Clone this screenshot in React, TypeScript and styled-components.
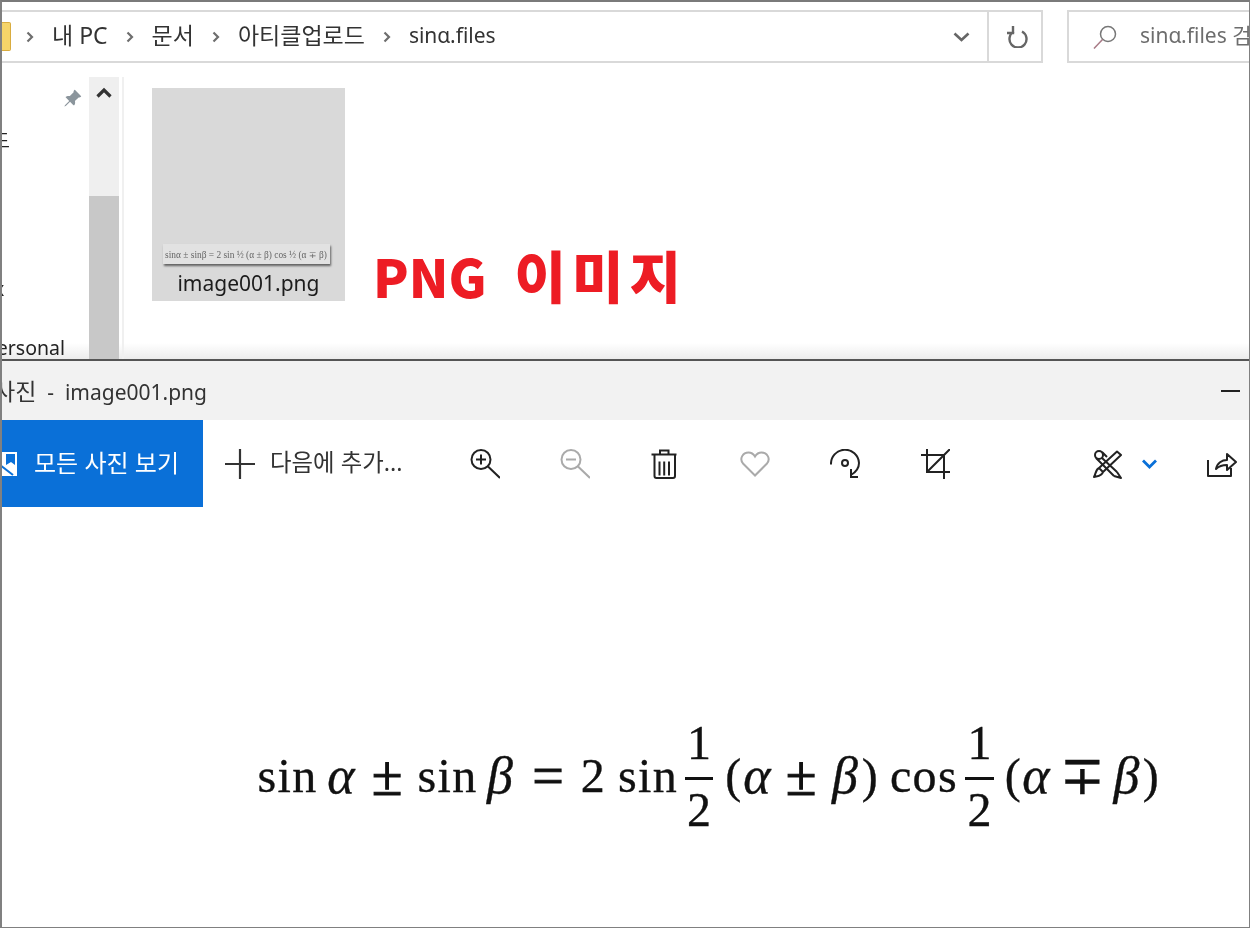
import React from 'react'
import styled, { createGlobalStyle } from 'styled-components'
import { BsPinAngleFill } from 'react-icons/bs'

const GlobalStyle = createGlobalStyle`
  html, body {
    margin: 0;
    background: #fff;
  }
`

const uiFont = `"Noto Sans", "Noto Sans CJK KR", sans-serif`
const mathFont = `"Liberation Serif", "DejaVu Serif", serif`

const Frame = styled.div`
  box-sizing: border-box;
  width: 1250px;
  height: 928px;
  display: flex;
  flex-direction: column;
  overflow: hidden;
  background: #fff;
  border-top: 2px solid #7a7a7a;
  border-left: 2px solid #808080;
  border-right: 1px solid #808080;
  border-bottom: 1px solid #808080;
  font-family: ${uiFont};
  color: #222;
  /* the screenshot is an upscaled capture, everything in it is a little soft */
  filter: blur(0.4px);
`

const Explorer = styled.section`
  flex: 0 0 357px;
  display: flex;
  flex-direction: column;
  overflow: hidden;
  background: linear-gradient(#fff calc(100% - 16px), #ececec);
  border-bottom: 2px solid #555;
`

const AddressRow = styled.div`
  display: flex;
  gap: 24px;
  padding-top: 8px;
  height: 53px;
`

const AddressBar = styled.div`
  flex: 0 0 1041px;
  box-sizing: border-box;
  display: flex;
  align-items: center;
  gap: 18px;
  border: 2px solid #d9d9d9;
  border-left: 0;
  font-size: 21px;
  color: #333;
`

const FolderTab = styled.span`
  flex: 0 0 9px;
  height: 29px;
  margin-right: -3px;
  background: #f5d469;
  border: 1px solid #d9ac3f;
  border-left: 0;
  border-radius: 0 2px 2px 0;
  box-sizing: border-box;
`

const Crumb = styled.span<{ $korean?: boolean }>`
  white-space: nowrap;
  line-height: 1;
  font-size: ${({ $korean }) => ($korean ? '23px' : '21px')};
  margin-top: -2px;
`

const AddressTools = styled.div`
  margin-left: auto;
  display: flex;
  align-self: stretch;
  align-items: center;
`

const DropButton = styled.span`
  display: flex;
  margin-right: 17px;
`

const RefreshButton = styled.span`
  display: flex;
  align-items: center;
  justify-content: center;
  align-self: stretch;
  width: 54px;
  padding-left: 5px;
  box-sizing: border-box;
  border-left: 2px solid #d9d9d9;
`

const SearchBox = styled.div`
  flex: 1;
  display: flex;
  align-items: center;
  gap: 23px;
  padding-left: 24px;
  border: 2px solid #d9d9d9;
  border-right: 0;
  overflow: hidden;
  white-space: nowrap;
  font-size: 21px;
  color: #6d6d6d;
`

const SearchGlyph = styled.svg`
  flex: 0 0 24px;
`

const SearchText = styled.span`
  margin-top: -5px;
`

const ExplorerBody = styled.div`
  flex: 1;
  display: flex;
  min-height: 0;
  padding-top: 14px;
`

const Sidebar = styled.nav`
  flex: 0 0 87px;
  position: relative;
  overflow: hidden;
  display: flex;
  flex-direction: column;
  font-size: 19.5px;
  line-height: 28px;
`

const PinButton = styled.span`
  position: absolute;
  top: 12px;
  right: 7px;
  display: flex;
  color: #8b959c;
`

const NavLabel = styled.span<{ $top: number; $left: number }>`
  margin-top: ${({ $top }) => $top}px;
  margin-left: ${({ $left }) => $left}px;
  white-space: nowrap;
`

const Scrollbar = styled.div`
  flex: 0 0 30px;
  display: flex;
  flex-direction: column;
  background: #efefef;
`

const ScrollArrow = styled.span`
  flex: 0 0 119px;
  display: flex;
  justify-content: center;
  padding-top: 10px;
  box-sizing: border-box;
`

const ScrollThumb = styled.span`
  flex: 1;
  background: #c8c8c8;
`

const PaneDivider = styled.span`
  flex: 0 0 2px;
  margin-left: 3px;
  background: #f0f0f0;
`

const FileArea = styled.div`
  flex: 1;
  display: flex;
  align-items: flex-start;
  padding: 11px 0 0 28px;
`

const FileTile = styled.div`
  width: 193px;
  height: 213px;
  display: flex;
  flex-direction: column;
  align-items: center;
  justify-content: flex-end;
  background: #d9d9d9;
  padding-bottom: 3px;
  box-sizing: border-box;
`

const Thumb = styled.div`
  width: 167px;
  height: 20px;
  margin: 0 5px 4px 0;
  display: flex;
  align-items: center;
  justify-content: center;
  background: #e2e2e2;
  box-shadow: 1px 2px 2px rgba(0, 0, 0, 0.55);
  font-family: ${mathFont};
  font-size: 9.4px;
  color: #666;
  white-space: nowrap;
  overflow: hidden;
`

const FileName = styled.span`
  font-size: 21px;
  line-height: 30px;
  color: #1c1c1c;
`

const RedLabel = styled.span`
  margin: 150px 0 0 28px;
  display: flex;
  align-items: baseline;
  gap: 28px;
  font-family: "Noto Sans CJK KR", sans-serif;
  line-height: 72px;
  font-weight: 900;
  color: #ed1c24;
  white-space: nowrap;
`

const RedWord = styled.span<{ $size: number; $spacing: number }>`
  font-size: ${({ $size }) => $size}px;
  letter-spacing: ${({ $spacing }) => $spacing}px;
`

const TitleBar = styled.header`
  flex: 0 0 59px;
  display: flex;
  align-items: center;
  justify-content: space-between;
  background: #f2f2f2;
  padding-right: 9px;
  font-size: 21px;
  color: #333;
`

const WindowTitle = styled.span`
  margin: -2px 0 0 -8px;
  white-space: pre;
`

const TitleKorean = styled.span`
  font-size: 23px;
`

const MinimizeLine = styled.span`
  width: 19px;
  height: 2px;
  background: #222;
`

const Toolbar = styled.div`
  flex: 0 0 87px;
  display: flex;
  align-items: center;
  padding-right: 12px;
`

const AllPhotosButton = styled.div`
  flex: 0 0 201px;
  align-self: stretch;
  display: flex;
  align-items: center;
  gap: 15px;
  background: #0a70d8;
  color: #fff;
  font-size: 24px;
  white-space: nowrap;
  overflow: hidden;
`

const AddButton = styled.div`
  flex: 0 0 237px;
  box-sizing: border-box;
  display: flex;
  align-items: center;
  gap: 15px;
  padding-left: 22px;
  font-size: 23.4px;
  color: #333;
  white-space: nowrap;
`

const ButtonText = styled.span`
  margin-top: -5px;
`

const ToolButton = styled.span`
  flex: 0 0 90px;
  display: flex;
  justify-content: center;
`

const RightTools = styled.div`
  margin-left: auto;
  display: flex;
  align-items: center;
`

const EditChevron = styled.span`
  display: flex;
  margin: 0 50px 0 19px;
`

const Viewer = styled.main`
  flex: 1;
  padding: 210px 0 0 255px;
`

const Formula = styled.div`
  display: flex;
  align-items: center;
  height: 118px;
  font-family: ${mathFont};
  font-size: 48px;
  line-height: 48px;
  color: #111;
  -webkit-text-stroke: 0.35px #111;
`

const tokenSize = { plain: '48px', greek: '52px', op: '56px', sign: '54px' }

const Token = styled.span<{ $w: number; $ml: number; $kind: keyof typeof tokenSize }>`
  flex: 0 0 ${({ $w }) => $w}px;
  min-width: 0;
  margin-left: ${({ $ml }) => $ml}px;
  display: flex;
  justify-content: center;
  white-space: nowrap;
  letter-spacing: ${({ $kind }) => ($kind === 'plain' ? '1.4px' : '0')};
  font-style: ${({ $kind }) => ($kind === 'greek' ? 'italic' : 'normal')};
  font-size: ${({ $kind }) => tokenSize[$kind]};
  -webkit-text-stroke-width: ${({ $kind }) => ($kind === 'op' ? '1px' : 'inherit')};
`

const Fraction = styled.span<{ $w: number; $ml: number }>`
  flex: 0 0 ${({ $w }) => $w}px;
  min-width: 0;
  margin-left: ${({ $ml }) => $ml}px;
  display: flex;
  flex-direction: column;
  align-items: center;
`

const FractionBar = styled.span`
  align-self: stretch;
  height: 3px;
  margin: 10px 0 6px;
  background: #111;
`

type Piece =
  | { kind: 'plain' | 'greek' | 'op' | 'sign'; text: string; x: number; w: number }
  | { kind: 'half'; x: number; w: number }

// x positions of each symbol, read off the screenshot
const pieces: Piece[] = [
  { kind: 'plain', text: 'sin', x: 257, w: 61 },
  { kind: 'greek', text: 'α', x: 328, w: 26 },
  { kind: 'op', text: '±', x: 372, w: 30 },
  { kind: 'plain', text: 'sin', x: 417, w: 61 },
  { kind: 'greek', text: 'β', x: 487, w: 26 },
  { kind: 'op', text: '=', x: 533, w: 30 },
  { kind: 'plain', text: '2', x: 583, w: 21 },
  { kind: 'plain', text: 'sin', x: 617, w: 62 },
  { kind: 'half', x: 685, w: 28 },
  { kind: 'plain', text: '(', x: 725, w: 18 },
  { kind: 'greek', text: 'α', x: 743, w: 28 },
  { kind: 'op', text: '±', x: 786, w: 30 },
  { kind: 'greek', text: 'β', x: 832, w: 26 },
  { kind: 'plain', text: ')', x: 863, w: 15 },
  { kind: 'plain', text: 'cos', x: 891, w: 66 },
  { kind: 'half', x: 965, w: 29 },
  { kind: 'plain', text: '(', x: 1005, w: 17 },
  { kind: 'greek', text: 'α', x: 1023, w: 26 },
  { kind: 'sign', text: '∓', x: 1067, w: 30 },
  { kind: 'greek', text: 'β', x: 1113, w: 27 },
  { kind: 'plain', text: ')', x: 1143, w: 17 },
]

const Chevron = () => (
  <svg width="8" height="14" viewBox="0 0 8 14" fill="none" stroke="#6e6e6e" strokeWidth="2.2">
    <path d="M1.5 2.5 6 7l-4.5 4.5" />
  </svg>
)

const ZoomIcon = ({ minus }: { minus?: boolean }) => (
  <svg width="30" height="30" viewBox="0 0 30 30" fill="none" stroke={minus ? '#aaa' : '#222'} strokeWidth="2">
    <circle cx="11" cy="10.5" r="9.5" />
    <path d="M18 17.5 30 29M6 10.5h10" />
    {!minus && <path d="M11 5.5v10" />}
  </svg>
)

const TrashIcon = () => (
  <svg width="30" height="30" viewBox="0 0 30 30" fill="none" stroke="#222" strokeWidth="2">
    <path d="M1.5 5.5h25M10 5V1.5h8.500V5M4.500 5.500V27a2 2 0 0 0 2 2h16.500a2 2 0 0 0 2-2V5.500M9.500 12.500v14M14.200 12.500v14M19 12.500v14" />
  </svg>
)

const HeartIcon = () => (
  <svg width="30" height="30" viewBox="0 0 30 30" fill="none" stroke="#aaa" strokeWidth="2">
    <path d="M15 26.500 3 14.500C-1 9.500 3 3.500 8.500 3.500c3 0 5 1.500 6.500 4 1.500-2.500 3.500-4 6.500-4C27 3.500 31 9.500 27 14.500Z" />
  </svg>
)

const RotateIcon = () => (
  <svg width="30" height="30" viewBox="0 0 30 30" fill="none" stroke="#222" strokeWidth="2">
    <path d="M1 15.500A14 14 0 0 1 29 14c0 5-3 9-8 12" />
    <circle cx="15" cy="14" r="3" />
    <path d="M21 20v8h7" />
  </svg>
)

const CropIcon = () => (
  <svg width="30" height="30" viewBox="0 0 30 30" fill="none" stroke="#222" strokeWidth="2">
    <path d="M1 6h23v24M7 0v23h23M30 0 7 23" />
  </svg>
)

const EditIcon = () => (
  <svg width="30" height="30" viewBox="0 0 30 30" fill="none" stroke="#222" strokeWidth="2" strokeLinejoin="round">
    <path d="M24 2.500 28 6 10 23l-4-4ZM6 19c-3 1-3 5-5 9 4-1 8-1 9-5" />
    <circle cx="6" cy="6" r="4" />
    <path d="M9 9 24 23M3 9l15 15M24 23l4 6-7-2M18 24l3 3M9 3l5 5" />
  </svg>
)

const ShareIcon = () => (
  <svg width="30" height="26" viewBox="0 0 30 26" fill="none" stroke="#222" strokeWidth="2" strokeLinejoin="round">
    <path d="M1 9v16h23v-8M9 18c1-6 6-9 11-9V3l9 8-9 8v-5c-5 0-8 1-11 4Z" />
  </svg>
)

const PhotosIcon = () => (
  <svg width="19" height="24" viewBox="0 0 19 24" fill="none" style={{ marginLeft: -2, flexShrink: 0 }}>
    <path d="M0 0h17v24H0z" fill="#fff" />
    <path d="M6 2v11l5-3 4 3V2z" fill="#0a70d8" />
    <path d="M0 13l13 10" stroke="#0a70d8" strokeWidth="2" />
  </svg>
)

export default function App() {
  return (
    <Frame>
      <GlobalStyle />
      <Explorer>
        <AddressRow>
          <AddressBar>
            <FolderTab />
            <Chevron />
            <Crumb $korean>내 PC</Crumb>
            <Chevron />
            <Crumb $korean>문서</Crumb>
            <Chevron />
            <Crumb $korean>아티클업로드</Crumb>
            <Chevron />
            <Crumb>sinα.files</Crumb>
            <AddressTools>
              <DropButton>
                <svg width="17" height="10" viewBox="0 0 17 10" fill="none" stroke="#666" strokeWidth="2.600">
                  <path d="M1.500 1.500 8.500 8l7-6.500" />
                </svg>
              </DropButton>
              <RefreshButton>
                <svg width="22" height="22" viewBox="0 0 22 22" fill="none" stroke="#666" strokeWidth="2.400">
                  <path d="M7 5.500a8.500 8.500 0 1 0 8 0M6 0v7H0" />
                </svg>
              </RefreshButton>
            </AddressTools>
          </AddressBar>
          <SearchBox>
            <SearchGlyph width="24" height="24" viewBox="0 0 24 24" fill="none" strokeWidth="1.500">
              <circle cx="15" cy="9" r="7.500" stroke="#777" />
              <path d="m9.500 14.500-8.500 9" stroke="#a87a86" />
            </SearchGlyph>
            <SearchText>sinα.files 검색</SearchText>
          </SearchBox>
        </AddressRow>
        <ExplorerBody>
          <Sidebar>
            <PinButton>
              <BsPinAngleFill size={19} />
            </PinButton>
            <NavLabel $top={50} $left={-10}>드</NavLabel>
            <NavLabel $top={120} $left={-8}>x</NavLabel>
            <NavLabel $top={31} $left={-17}>Personal</NavLabel>
          </Sidebar>
          <Scrollbar>
            <ScrollArrow>
              <svg width="16" height="11" viewBox="0 0 16 11" fill="none" stroke="#333" strokeWidth="3.200">
                <path d="M1.500 9.500 8 3l6.500 6.500" />
              </svg>
            </ScrollArrow>
            <ScrollThumb />
          </Scrollbar>
          <PaneDivider />
          <FileArea>
            <FileTile>
              <Thumb>sinα ± sinβ = 2 sin ½ (α ± β) cos ½ (α ∓ β)</Thumb>
              <FileName>image001.png</FileName>
            </FileTile>
            <RedLabel>
              <RedWord $size={52} $spacing={0}>PNG</RedWord>
              <RedWord $size={56} $spacing={6}>이미지</RedWord>
            </RedLabel>
          </FileArea>
        </ExplorerBody>
      </Explorer>
      <TitleBar>
        <WindowTitle>
          <TitleKorean>사진</TitleKorean>{'  -  '}image001.png
        </WindowTitle>
        <MinimizeLine />
      </TitleBar>
      <Toolbar>
        <AllPhotosButton>
          <PhotosIcon />
          <ButtonText>모든 사진 보기</ButtonText>
        </AllPhotosButton>
        <AddButton>
          <svg width="30" height="30" viewBox="0 0 30 30" stroke="#333" strokeWidth="2.200">
            <path d="M0 15h30M15 0v30" />
          </svg>
          <ButtonText>다음에 추가...</ButtonText>
        </AddButton>
        <ToolButton><ZoomIcon /></ToolButton>
        <ToolButton><ZoomIcon minus /></ToolButton>
        <ToolButton><TrashIcon /></ToolButton>
        <ToolButton><HeartIcon /></ToolButton>
        <ToolButton><RotateIcon /></ToolButton>
        <ToolButton><CropIcon /></ToolButton>
        <RightTools>
          <EditIcon />
          <EditChevron>
            <svg width="15" height="10" viewBox="0 0 15 10" fill="none" stroke="#0a70d8" strokeWidth="2.800">
              <path d="M1 1.500 7.500 8 14 1.500" />
            </svg>
          </EditChevron>
          <ShareIcon />
        </RightTools>
      </Toolbar>
      <Viewer>
        <Formula>
          {pieces.map((p, i) => {
            const prev = pieces[i - 1]
            const ml = prev ? p.x - prev.x - prev.w : 0
            if (p.kind === 'half') {
              return (
                <Fraction key={i} $w={p.w} $ml={ml}>
                  <span>1</span>
                  <FractionBar />
                  <span>2</span>
                </Fraction>
              )
            }
            return (
              <Token key={i} $w={p.w} $ml={ml} $kind={p.kind}>
                {p.text}
              </Token>
            )
          })}
        </Formula>
      </Viewer>
    </Frame>
  )
}
